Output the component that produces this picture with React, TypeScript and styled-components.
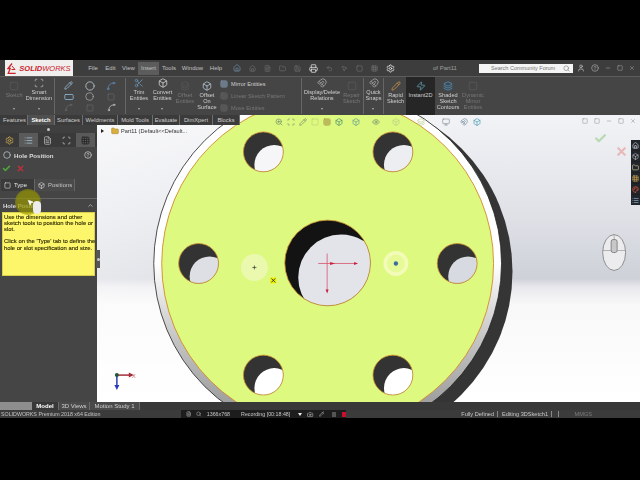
import React from 'react';
import styled, { createGlobalStyle } from 'styled-components';
import {
  Search,
  ZoomIn,
  Scan,
  Pencil,
  Box,
  Eye,
  Monitor,
  Save,
  FileText,
  Printer,
  Settings,
  Undo2,
  MousePointer2,
  Home,
  Camera,
  User,
  HelpCircle,
  Minus,
  Square,
  X,
  Check,
  ChevronUp,
  Circle,
  Spline,
  RectangleHorizontal,
  Scissors,
  Layers,
  Grid3x3,
  Magnet,
  Zap,
  Folder,
  Palette,
  List,
} from 'lucide-react';

const MENU = [
  { label: 'File', width: 18 },
  { label: 'Edit', width: 17 },
  { label: 'View', width: 19 },
  { label: 'Insert', width: 21, active: true },
  { label: 'Tools', width: 20 },
  { label: 'Window', width: 27 },
  { label: 'Help', width: 20 },
];

const TABS = [
  { label: 'Features', width: 26 },
  { label: 'Sketch', width: 27, active: true },
  { label: 'Surfaces', width: 28 },
  { label: 'Weldments', width: 35 },
  { label: 'Mold Tools', width: 35 },
  { label: 'Evaluate', width: 27 },
  { label: 'DimXpert', width: 33 },
  { label: 'Blocks', width: 27 },
];

const SMALL_HOLES = [
  { cx: 263, cy: 152, lit: '#f6f6f8' },
  { cx: 393, cy: 152, lit: '#eceef2' },
  { cx: 198, cy: 264, lit: '#dedfe5' },
  { cx: 457.5, cy: 264, lit: '#d8dae2' },
  { cx: 263, cy: 376, lit: '#ffffff' },
  { cx: 393, cy: 376, lit: '#ffffff' },
];

const GlobalStyle = createGlobalStyle`
  html, body {
    margin: 0;
    padding: 0;
    background: #000;
  }
  body {
    width: 640px;
    height: 480px;
    overflow: hidden;
    font-family: "Liberation Sans", Arial, sans-serif;
  }
`;

const Page = styled.div`
  width: 640px;
  height: 480px;
  padding-top: 60px;
  box-sizing: border-box;
  background: #000;
  overflow: hidden;
`;

const Window = styled.div`
  width: 640px;
  height: 358px;
  display: flex;
  flex-direction: column;
  filter: blur(0.4px);
`;

const TitleBar = styled.div`
  height: 16px;
  flex-shrink: 0;
  display: flex;
  align-items: center;
  background: #3d3d3d;
  color: #c0c0c0;
  font-size: 6px;
`;

const Logo = styled.div`
  width: 68px;
  height: 16px;
  margin-left: 5px;
  margin-right: 11px;
  flex-shrink: 0;
  display: flex;
  align-items: center;
  justify-content: center;
  gap: 2px;
  background: #f1eeee;
  color: #c8242b;
  font-size: 7.5px;
  font-weight: 700;
  font-style: italic;
`;

const LogoLight = styled.span`
  font-weight: 400;
`;

const MenuItem = styled.div<{ $width: number; $active?: boolean }>`
  width: ${(p) => p.$width}px;
  height: 13px;
  display: flex;
  align-items: center;
  justify-content: center;
  flex-shrink: 0;
  background: ${(p) => (p.$active ? '#5c5c5c' : 'transparent')};
`;

const QuickBar = styled.div`
  width: 196px;
  margin-left: 7px;
  display: flex;
  align-items: center;
  gap: 8px;
  flex-shrink: 0;
  color: #747474;
`;

const DocTitle = styled.div`
  width: 50px;
  padding-left: 4px;
  box-sizing: border-box;
  color: #a0a0a0;
  flex-shrink: 0;
  white-space: nowrap;
`;

const SearchBox = styled.div`
  width: 94px;
  height: 9px;
  flex-shrink: 0;
  display: flex;
  align-items: center;
  justify-content: space-between;
  padding: 0 3px 0 12px;
  box-sizing: border-box;
  background: #f4f4f4;
  color: #777;
  font-size: 5.5px;
`;

const WindowButtons = styled.div`
  margin-left: 4px;
  display: flex;
  align-items: center;
  gap: 6px;
  color: #a8a8a8;
`;

const Ribbon = styled.div`
  height: 39px;
  flex-shrink: 0;
  display: flex;
  padding-left: 3px;
  background: #454545;
  border-top: 1px solid #5c5c5c;
  box-sizing: border-box;
`;

const RibbonButton = styled.div<{ $width: number; $dim?: boolean; $active?: boolean; $low?: boolean }>`
  width: ${(p) => p.$width}px;
  flex-shrink: 0;
  display: flex;
  flex-direction: column;
  align-items: center;
  padding-top: ${(p) => (p.$low ? 4 : 1)}px;
  box-sizing: border-box;
  position: relative;
  background: ${(p) => (p.$active ? '#262626' : 'transparent')};
  color: ${(p) => (p.$dim ? '#777777' : '#d0d0d0')};
  font-size: 5.6px;
  line-height: 6.1px;
  text-align: center;
  white-space: pre-line;
`;

const RibbonIcon = styled.div<{ $color?: string }>`
  height: 11px;
  opacity: 0.85;
  color: ${(p) => p.$color || '#c4c4c4'};
`;

const Caret = styled.span`
  position: absolute;
  bottom: 5px;
  left: 50%;
  margin-left: -1.5px;
  border-top: 2px solid #b0b0b0;
  border-left: 1.5px solid transparent;
  border-right: 1.5px solid transparent;
`;

const RibbonDivider = styled.div`
  width: 1px;
  margin: 1px 1px;
  flex-shrink: 0;
  background: #666666;
`;

const IconGrid = styled.div`
  width: 68px;
  flex-shrink: 0;
  padding: 3px 2px;
  box-sizing: border-box;
  display: grid;
  grid-template-columns: repeat(3, 1fr);
  grid-auto-rows: 11px;
  align-items: center;
  justify-items: center;
  color: #9fb0bd;
`;

const EntityList = styled.div`
  width: 82px;
  flex-shrink: 0;
  padding: 3px 0 0 2px;
  box-sizing: border-box;
  display: flex;
  flex-direction: column;
  gap: 4px;
  font-size: 5.6px;
`;

const EntityRow = styled.div<{ $dim?: boolean }>`
  height: 8px;
  display: flex;
  align-items: center;
  gap: 3px;
  color: ${(p) => (p.$dim ? '#767676' : '#d0d0d0')};
`;

const Main = styled.div`
  flex: 1;
  min-height: 0;
  display: flex;
  position: relative;
`;

const CommandTabs = styled.div`
  position: absolute;
  top: 0;
  left: 0;
  z-index: 3;
  width: 240px;
  height: 10px;
  padding-left: 2px;
  box-sizing: border-box;
  display: flex;
  background: #3b3b3b;
`;

const CommandTab = styled.div<{ $width: number; $active?: boolean }>`
  width: ${(p) => p.$width}px;
  flex-shrink: 0;
  display: flex;
  align-items: center;
  justify-content: center;
  border-right: 1px solid #6e6e6e;
  box-sizing: border-box;
  background: ${(p) => (p.$active ? '#4f4f4f' : 'transparent')};
  color: ${(p) => (p.$active ? '#ffffff' : '#cfcfcf')};
  font-size: 5.8px;
  font-weight: ${(p) => (p.$active ? 700 : 400)};
`;

const Panel = styled.div`
  width: 97px;
  flex-shrink: 0;
  padding-top: 10px;
  box-sizing: border-box;
  display: flex;
  flex-direction: column;
  position: relative;
  background: #454545;
  color: #dcdcdc;
  font-size: 6px;
`;

const Grip = styled.div`
  height: 8px;
  flex-shrink: 0;
  display: flex;
  align-items: center;
  justify-content: center;
  background: #3f3f3f;
`;

const GripDot = styled.span`
  width: 3px;
  height: 3px;
  background: #c8c8c8;
  border-radius: 50%;
`;

const PanelIcons = styled.div`
  height: 14px;
  flex-shrink: 0;
  display: flex;
  background: #3a3a3a;
`;

const PanelIcon = styled.div<{ $active?: boolean; $color?: string }>`
  width: 19px;
  display: flex;
  align-items: center;
  justify-content: center;
  background: ${(p) => (p.$active ? '#5a5a5a' : 'transparent')};
  color: ${(p) => p.$color || '#b8b8b8'};
`;

const PanelTitle = styled.div`
  height: 14px;
  margin-top: 1px;
  padding: 0 5px 0 3px;
  display: flex;
  align-items: center;
  gap: 3px;
  font-size: 6.2px;
  font-weight: 700;
`;

const PanelHelp = styled.div`
  margin-left: auto;
  display: flex;
  color: #d8d8d8;
`;

const ConfirmRow = styled.div`
  height: 12px;
  padding-left: 2px;
  display: flex;
  align-items: center;
  gap: 5px;
`;

const SubTabs = styled.div`
  height: 12px;
  margin-top: 5px;
  padding-left: 1px;
  display: flex;
`;

const SubTab = styled.div<{ $width: number; $active?: boolean }>`
  width: ${(p) => p.$width}px;
  display: flex;
  align-items: center;
  gap: 3px;
  padding-left: 3px;
  box-sizing: border-box;
  background: ${(p) => (p.$active ? '#3a3a3a' : '#4a4a4a')};
  border-right: 1px solid #666;
  color: ${(p) => (p.$active ? '#e6e6e6' : '#c4c4c4')};
`;

const SectionHead = styled.div`
  height: 14px;
  margin-top: 7px;
  padding: 0 3px;
  box-sizing: border-box;
  display: flex;
  align-items: center;
  justify-content: space-between;
  border-top: 1px solid #666;
  font-weight: 700;
  font-size: 6px;
`;

const Tip = styled.div`
  width: 93px;
  height: 64px;
  margin-left: 2px;
  padding: 1px 0 0 1px;
  box-sizing: border-box;
  background: #fdf56a;
  border: 1px solid #d8cf4a;
  color: #2c2a00;
  font-size: 5.9px;
  line-height: 6.1px;
  white-space: nowrap;
  -webkit-text-stroke: 0.12px #2c2a00;
`;

const TipParagraph = styled.p`
  margin: 0 0 6.2px 0;
`;

const Halo = styled.div`
  position: absolute;
  left: 15px;
  top: 74px;
  width: 26px;
  height: 26px;
  border-radius: 50%;
  background: radial-gradient(circle, rgba(150, 150, 0, 0.7) 60%, rgba(150, 150, 0, 0) 100%);
`;

const PointerMark = styled.div`
  position: absolute;
  left: 27px;
  top: 84px;
  color: #fff;
  display: flex;
`;

const MouseMark = styled.div`
  position: absolute;
  left: 33px;
  top: 86px;
  width: 8px;
  height: 13px;
  border-radius: 4px;
  background: #ececec;
`;

const CollapseHandle = styled.div`
  position: absolute;
  right: -3px;
  top: 135px;
  z-index: 2;
  width: 4px;
  height: 18px;
  background: #555;
  display: flex;
  align-items: center;
  justify-content: center;
`;

const Viewport = styled.div`
  flex: 1;
  position: relative;
  overflow: hidden;
  background: linear-gradient(
    90deg,
    rgba(255, 255, 255, 0.5) 0%,
    rgba(255, 255, 255, 0) 70%
  ),
    linear-gradient(
      180deg,
      #f2f3f6 0%,
      #dfe1e7 35%,
      #cfd1d9 57%,
      #e9e9ed 60%,
      #f8f8f9 66%,
      #ffffff 100%
    );
`;

const Scene = styled.svg`
  position: absolute;
  inset: 0;
  width: 100%;
  height: 100%;
`;

const FeatureTree = styled.div`
  position: absolute;
  left: 4px;
  top: 12px;
  display: flex;
  align-items: center;
  gap: 2px;
  color: #333;
  font-size: 5.6px;
`;

const TreeArrow = styled.span`
  width: 0;
  height: 0;
  border-left: 3px solid #222;
  border-top: 2px solid transparent;
  border-bottom: 2px solid transparent;
  margin-right: 5px;
`;

const HeadsUp = styled.div`
  position: absolute;
  left: 177px;
  top: 3px;
  display: flex;
  gap: 2px;
  align-items: center;
  color: #6d8a70;
`;

const HeadsUpIcon = styled.div<{ $width?: number; $color?: string }>`
  width: ${(p) => p.$width || 10}px;
  display: flex;
  justify-content: center;
  color: ${(p) => p.$color || 'inherit'};
`;

const ViewControls = styled.div`
  position: absolute;
  right: 4px;
  top: 3px;
  display: flex;
  gap: 6px;
  color: #8f8f8f;
`;

const Confirm = styled.div<{ $x: number; $y: number; $color: string }>`
  position: absolute;
  left: ${(p) => p.$x}px;
  top: ${(p) => p.$y}px;
  display: flex;
  color: ${(p) => p.$color};
`;

const TaskPane = styled.div`
  position: absolute;
  right: 0;
  top: 25px;
  width: 9px;
  display: flex;
  flex-direction: column;
  gap: 1px;
  background: #1f1f1f;
`;

const TaskIcon = styled.div<{ $color: string }>`
  height: 10px;
  display: flex;
  align-items: center;
  justify-content: center;
  background: #20262c;
  color: ${(p) => p.$color};
`;

const BottomTabs = styled.div`
  height: 8px;
  flex-shrink: 0;
  display: flex;
  background: #383838;
  font-size: 6px;
  color: #d8d8d8;
`;

const TabScroller = styled.div`
  width: 32px;
  flex-shrink: 0;
  background: #8e8e8e;
`;

const BottomTab = styled.div<{ $width: number; $active?: boolean }>`
  width: ${(p) => p.$width}px;
  flex-shrink: 0;
  display: flex;
  align-items: center;
  justify-content: center;
  box-sizing: border-box;
  background: ${(p) => (p.$active ? '#383838' : '#4a4a4a')};
  border-right: 1px solid #6a6a6a;
  color: ${(p) => (p.$active ? '#ffffff' : '#d0d0d0')};
  font-weight: ${(p) => (p.$active ? 700 : 400)};
`;

const StatusBar = styled.div`
  height: 8px;
  flex-shrink: 0;
  display: flex;
  align-items: center;
  background: #3b3b3b;
  color: #c4c4c4;
  font-size: 5.6px;
`;

const Edition = styled.div`
  width: 181px;
  padding-left: 1px;
  box-sizing: border-box;
  flex-shrink: 0;
  white-space: nowrap;
  font-size: 5.3px;
`;

const Recorder = styled.div`
  width: 165px;
  height: 100%;
  flex-shrink: 0;
  padding-left: 5px;
  box-sizing: border-box;
  display: flex;
  align-items: center;
  gap: 5px;
  background: #1d1d1d;
  color: #c8c8c8;
  font-size: 5.3px;
`;

const RecordText = styled.span<{ $gap?: number }>`
  margin-right: ${(p) => p.$gap || 0}px;
  white-space: nowrap;
`;

const RecordArrow = styled.span`
  border-top: 3px solid #eee;
  border-left: 2.5px solid transparent;
  border-right: 2.5px solid transparent;
`;

const RecordStop = styled.span`
  width: 5px;
  height: 5px;
  margin-left: 1px;
  background: #c8102e;
`;

const RecordPause = styled.span`
  width: 4px;
  height: 5px;
  margin-left: 3px;
  background: #555;
`;

const StatusCell = styled.div<{ $width: number; $dim?: boolean; $plain?: boolean }>`
  width: ${(p) => p.$width}px;
  flex-shrink: 0;
  height: 6px;
  display: flex;
  align-items: center;
  justify-content: flex-end;
  padding-right: 3px;
  box-sizing: border-box;
  border-right: ${(p) => (p.$plain ? 'none' : '1px solid #8a8a8a')};
  color: ${(p) => (p.$dim ? '#7c7c7c' : '#c8c8c8')};
  white-space: nowrap;
`;

const Hole = ({ cx, cy, r, lit, dark, dx, dy, id }: {
  cx: number;
  cy: number;
  r: number;
  lit: string;
  dark: string;
  dx: number;
  dy: number;
  id: string;
}) => (
  <g>
    <clipPath id={id}>
      <circle cx={cx} cy={cy} r={r} />
    </clipPath>
    <circle cx={cx} cy={cy} r={r} fill={dark} />
    <circle cx={cx + dx} cy={cy + dy} r={r} fill={lit} clipPath={`url(#${id})`} />
    <circle cx={cx} cy={cy} r={r} fill="none" stroke="#c98a2e" strokeWidth={0.8} />
  </g>
);

const Disc = () => (
  <Scene viewBox="97 115 543 288">
    <defs>
      <linearGradient id="rim" x1="0" y1="0" x2="0" y2="1">
        <stop offset="0.5" stopColor="#ffffff" />
        <stop offset="0.72" stopColor="#c4c4c4" />
        <stop offset="1" stopColor="#8a8a8a" />
      </linearGradient>
      <filter id="soft">
        <feGaussianBlur stdDeviation="0.8" />
      </filter>
    </defs>
    <circle cx={338.5} cy={272} r={174.5} fill="#353535" filter="url(#soft)" />
    <circle cx={327.5} cy={264} r={174.5} fill="url(#rim)" stroke="#222" strokeWidth={0.8} />
    <circle cx={327.5} cy={264} r={166.5} fill="#def97f" stroke="#d08a2c" strokeWidth={0.9} />
    {SMALL_HOLES.map((h, i) => (
      <Hole
        key={i}
        id={`hole${i}`}
        cx={h.cx}
        cy={h.cy}
        r={20}
        lit={h.lit}
        dark="#333333"
        dx={11}
        dy={13}
      />
    ))}
    <Hole id="bore" cx={327.5} cy={263.5} r={43} lit="#e3e4ea" dark="#131313" dx={13.5} dy={14.5} />

    <line x1={327} y1={254} x2={327} y2={292} stroke="#d9536b" strokeWidth={0.8} />
    <line x1={318} y1={264} x2={357} y2={264} stroke="#d9536b" strokeWidth={0.8} />
    <polygon points="330,262.5 335,264 330,265.5" fill="#c8203c" />
    <polygon points="354,262.5 358,264 354,265.5" fill="#c8203c" />
    <polygon points="325.5,290 328.5,290 327,294" fill="#c8203c" />

    <circle cx={396} cy={264} r={12.5} fill="#f3fbb8" />
    <circle cx={396} cy={264} r={9} fill="#e7fa98" />
    <circle cx={396} cy={264} r={2.2} fill="#3f6da0" />

    <circle cx={254} cy={268} r={13.5} fill="#edf9bc" opacity={0.8} />
    <path d="M252 268h4M254 266v4" stroke="#333" strokeWidth={0.7} />
    <rect x={270} y={278} width={6} height={6} fill="#eef000" />
    <path d="M271 283l4-4M271 279l4 4" stroke="#333" strokeWidth={0.9} />

    <path d="M116 376h13" stroke="#a42c3c" strokeWidth={1.5} />
    <polygon points="128,373.5 133,376 128,378.5" fill="#a42c3c" />
    <path d="M116 376v11" stroke="#2a3ab8" strokeWidth={1.5} />
    <polygon points="113.5,386 118.5,386 116,391" fill="#2a3ab8" />
    <circle cx={116} cy={376} r={2} fill="#1f5a32" />
    <text x={131} y={378.5} fontSize={6} fill="#c46a72" fontFamily="Liberation Sans">
      X
    </text>

    <ellipse cx={615} cy={253} rx={11.5} ry={18} fill="#ececee" stroke="#777" strokeWidth={0.8} />
    <path d="M603.5 251h23M615 235v16" stroke="#999" strokeWidth={0.7} />
    <rect x={612} y={240} width={6} height={13} rx={2} fill="#c8c8c8" stroke="#666" strokeWidth={0.7} />
  </Scene>
);

const LogoMark = () => (
  <svg width="10" height="11" viewBox="0 0 10 11">
    <path d="M5 0.5L1 5.5h2.2L1.2 10.5h7.5" fill="none" stroke="#c8242b" strokeWidth="1.3" />
    <path d="M5 3l3 3.5H4.5" fill="none" stroke="#c8242b" strokeWidth="1" />
  </svg>
);

const App = () => {
  return (
    <>
      <GlobalStyle />
      <Page>
        <Window>
          <TitleBar>
            <Logo>
              <LogoMark />
              <span>
                SOLID<LogoLight>WORKS</LogoLight>
              </span>
            </Logo>
            {MENU.map((m) => (
              <MenuItem key={m.label} $width={m.width} $active={m.active}>
                {m.label}
              </MenuItem>
            ))}
            <QuickBar>
              <Home size={8} color="#6f8fa8" />
              <Home size={7} />
              <FileText size={7} />
              <Folder size={7} />
              <Save size={7} />
              <Printer size={9} color="#e8e8e8" />
              <Undo2 size={7} />
              <MousePointer2 size={7} />
              <Square size={7} />
              <Grid3x3 size={7} />
              <Settings size={9} color="#f0f0f0" />
            </QuickBar>
            <DocTitle>of Part11</DocTitle>
            <SearchBox>
              Search Community Forum
              <Search size={7} />
            </SearchBox>
            <WindowButtons>
              <User size={8} color="#c8c8c8" />
              <HelpCircle size={8} />
              <Minus size={6} />
              <Square size={6} />
              <X size={6} />
            </WindowButtons>
          </TitleBar>

          <Ribbon>
            <RibbonButton $width={22} $dim $low>
              <RibbonIcon $color="#5c5c5c"><Square size={10} /></RibbonIcon>
              Sketch
              <Caret />
            </RibbonButton>
            <RibbonButton $width={28}>
              <RibbonIcon><Scan size={10} /></RibbonIcon>
              {'Smart\nDimension'}
              <Caret />
            </RibbonButton>
            <RibbonDivider />
            <IconGrid>
              <Pencil size={9} color="#9fc0d8" />
              <Circle size={10} color="#b8c8d0" />
              <Spline size={10} color="#5f88b8" />
              <RectangleHorizontal size={10} color="#8fb8d8" />
              <Circle size={9} color="#a8a8a8" />
              <Square size={8} color="#666" />
              <Spline size={9} color="#666" />
              <Square size={8} color="#666" />
              <Spline size={9} color="#c0c0c0" />
            </IconGrid>
            <RibbonDivider />
            <RibbonButton $width={24}>
              <RibbonIcon $color="#6fa0c8"><Scissors size={10} /></RibbonIcon>
              {'Trim\nEntities'}
              <Caret />
            </RibbonButton>
            <RibbonButton $width={23}>
              <RibbonIcon $color="#e8e8e8"><Box size={10} /></RibbonIcon>
              {'Convert\nEntities'}
              <Caret />
            </RibbonButton>
            <RibbonButton $width={22} $dim $low>
              <RibbonIcon $color="#5c5c5c"><Layers size={10} /></RibbonIcon>
              {'Offset\nEntities'}
            </RibbonButton>
            <RibbonButton $width={22} $low>
              <RibbonIcon $color="#c8d8e8"><Box size={10} /></RibbonIcon>
              {'Offset\nOn\nSurface'}
            </RibbonButton>
            <EntityList>
              <EntityRow><Grid3x3 size={8} color="#8fa8c0" />Mirror Entities</EntityRow>
              <EntityRow $dim><Grid3x3 size={8} color="#666" />Linear Sketch Pattern</EntityRow>
              <EntityRow $dim><Grid3x3 size={8} color="#666" />Move Entities</EntityRow>
            </EntityList>
            <RibbonDivider />
            <RibbonButton $width={38}>
              <RibbonIcon $color="#b8b8b8"><Magnet size={10} /></RibbonIcon>
              {'Display/Delete\nRelations'}
              <Caret />
            </RibbonButton>
            <RibbonButton $width={21} $dim $low>
              <RibbonIcon $color="#5c5c5c"><Square size={10} /></RibbonIcon>
              {'Repair\nSketch'}
            </RibbonButton>
            <RibbonDivider />
            <RibbonButton $width={17}>
              <RibbonIcon $color="#b8b8b8"><Magnet size={10} /></RibbonIcon>
              {'Quick\nSnaps'}
              <Caret />
            </RibbonButton>
            <RibbonDivider />
            <RibbonButton $width={21} $low>
              <RibbonIcon $color="#d8a050"><Pencil size={10} /></RibbonIcon>
              {'Rapid\nSketch'}
            </RibbonButton>
            <RibbonButton $width={29} $active $low>
              <RibbonIcon $color="#6fb0c8"><Zap size={10} /></RibbonIcon>
              Instant2D
            </RibbonButton>
            <RibbonButton $width={26} $low>
              <RibbonIcon $color="#4f9fd8"><Layers size={10} /></RibbonIcon>
              {'Shaded\nSketch\nContours'}
            </RibbonButton>
            <RibbonButton $width={24} $dim $low>
              <RibbonIcon $color="#5c5c5c"><Square size={10} /></RibbonIcon>
              {'Dynamic\nMirror\nEntities'}
            </RibbonButton>
          </Ribbon>

          <Main>
            <CommandTabs>
              {TABS.map((t) => (
                <CommandTab key={t.label} $width={t.width} $active={t.active}>
                  {t.label}
                </CommandTab>
              ))}
            </CommandTabs>

            <Panel>
              <Grip><GripDot /></Grip>
              <PanelIcons>
                <PanelIcon $color="#d8b050"><Settings size={9} /></PanelIcon>
                <PanelIcon $active $color="#a8c8d8"><List size={9} /></PanelIcon>
                <PanelIcon><FileText size={9} /></PanelIcon>
                <PanelIcon><Scan size={9} /></PanelIcon>
                <PanelIcon $active $color="#222"><Grid3x3 size={9} /></PanelIcon>
              </PanelIcons>
              <PanelTitle>
                <Circle size={8} color="#c8d8e0" />
                Hole Position
                <PanelHelp><HelpCircle size={8} /></PanelHelp>
              </PanelTitle>
              <ConfirmRow>
                <Check size={9} color="#4fa83c" strokeWidth={4} />
                <X size={9} color="#b8323c" strokeWidth={4} />
              </ConfirmRow>
              <SubTabs>
                <SubTab $width={34} $active><Square size={7} color="#e0e0e0" />Type</SubTab>
                <SubTab $width={40}><Box size={7} color="#e0e0e0" />Positions</SubTab>
              </SubTabs>
              <SectionHead>
                Hole Position
                <ChevronUp size={7} />
              </SectionHead>
              <Tip>
                <TipParagraph>
                  Use the dimensions and other
                  <br />
                  sketch tools to position the hole or
                  <br />
                  slot.
                </TipParagraph>
                <TipParagraph>
                  Click on the 'Type' tab to define the
                  <br />
                  hole or slot specification and size.
                </TipParagraph>
              </Tip>
              <Halo />
              <MouseMark />
              <PointerMark><MousePointer2 size={7} fill="#fff" /></PointerMark>
              <CollapseHandle><GripDot /></CollapseHandle>
            </Panel>

            <Viewport>
              <Disc />
              <FeatureTree>
                <TreeArrow />
                <Folder size={8} color="#b89030" fill="#d8b040" />
                Part11 (Default&lt;&lt;Default...
              </FeatureTree>
              <HeadsUp>
                <HeadsUpIcon><ZoomIn size={8} /></HeadsUpIcon>
                <HeadsUpIcon><Scan size={8} /></HeadsUpIcon>
                <HeadsUpIcon><Pencil size={8} /></HeadsUpIcon>
                <HeadsUpIcon $color="#bfd070"><Square size={8} /></HeadsUpIcon>
                <HeadsUpIcon $color="#a08a40"><Grid3x3 size={8} /></HeadsUpIcon>
                <HeadsUpIcon $color="#3f8a70"><Box size={8} /></HeadsUpIcon>
                <HeadsUpIcon $width={20} $color="#5f9a90"><Box size={8} /></HeadsUpIcon>
                <HeadsUpIcon $width={16}><Eye size={8} /></HeadsUpIcon>
                <HeadsUpIcon $width={20} $color="#b8cc88"><Box size={8} /></HeadsUpIcon>
                <HeadsUpIcon $width={26} $color="#b8cc88"><Layers size={8} /></HeadsUpIcon>
                <HeadsUpIcon $width={20} $color="#889098"><Monitor size={8} /></HeadsUpIcon>
                <HeadsUpIcon $width={12} $color="#708898"><Magnet size={8} /></HeadsUpIcon>
                <HeadsUpIcon $color="#3f98b0"><Box size={8} /></HeadsUpIcon>
              </HeadsUp>
              <ViewControls>
                <Square size={6} />
                <Square size={6} />
                <Minus size={6} />
                <Square size={6} />
                <X size={6} />
              </ViewControls>
              <Confirm $x={497} $y={17} $color="#b8d8b0"><Check size={13} strokeWidth={4} /></Confirm>
              <Confirm $x={518} $y={30} $color="#e8b8b8"><X size={13} strokeWidth={4} /></Confirm>
              <TaskPane>
                <TaskIcon $color="#e8e8e8"><Home size={7} /></TaskIcon>
                <TaskIcon $color="#c8c8c8"><Box size={7} /></TaskIcon>
                <TaskIcon $color="#e8d8a0"><Folder size={7} /></TaskIcon>
                <TaskIcon $color="#d8a850"><Grid3x3 size={7} /></TaskIcon>
                <TaskIcon $color="#e85838"><Palette size={7} /></TaskIcon>
                <TaskIcon $color="#a8c8e8"><List size={7} /></TaskIcon>
              </TaskPane>
            </Viewport>
          </Main>

          <BottomTabs>
            <TabScroller />
            <BottomTab $width={27} $active>Model</BottomTab>
            <BottomTab $width={31}>3D Views</BottomTab>
            <BottomTab $width={50}>Motion Study 1</BottomTab>
          </BottomTabs>

          <StatusBar>
            <Edition>SOLIDWORKS Premium 2018 x64 Edition</Edition>
            <Recorder>
              <FileText size={6} />
              <Search size={6} />
              <RecordText $gap={6}>1366x768</RecordText>
              <RecordText $gap={3}>Recording [00:18:48]</RecordText>
              <RecordArrow />
              <Camera size={7} />
              <Pencil size={6} />
              <RecordPause />
              <RecordStop />
            </Recorder>
            <StatusCell $width={152}>Fully Defined</StatusCell>
            <StatusCell $width={54}>Editing 3DSketch1</StatusCell>
            <StatusCell $width={7} />
            <StatusCell $width={36} $dim $plain>MMGS</StatusCell>
          </StatusBar>
        </Window>
      </Page>
    </>
  );
};

export default App;
